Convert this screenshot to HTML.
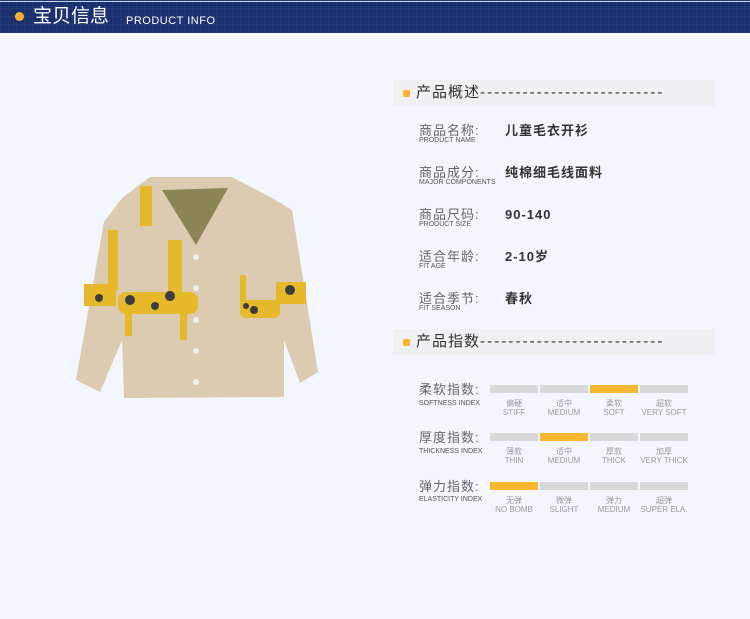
<!DOCTYPE html>
<html><head><meta charset="utf-8"><style>
*{margin:0;padding:0}
body{width:750px;height:619px;background:#f3f6fc;position:relative;overflow:hidden;font-family:"Liberation Sans","Noto Sans CJK SC",sans-serif}
.a{position:absolute;white-space:nowrap}
.hdr{position:absolute;left:0;top:0;width:750px;height:33px;background-color:#1a3070;
background-image:linear-gradient(rgba(255,255,255,.035) 1px,transparent 1px),linear-gradient(90deg,rgba(255,255,255,.035) 1px,transparent 1px);background-size:8px 8px}
.line{position:absolute;left:0;top:1px;width:750px;height:1px;background:#c9d3ea}
.sec{position:absolute;left:393px;width:322px;height:26px;background:#f0f0f2}
.dot{position:absolute;width:7px;height:7px;border-radius:2px;background:#f7b42c}
.st{font-size:15px;line-height:20px;color:#333;letter-spacing:1px}
.st span{letter-spacing:2.1px}
.lb{font-size:13px;line-height:15px;color:#666;letter-spacing:1px}
.en{font-size:7px;line-height:8px;color:#555}
.vl{font-size:13px;line-height:15px;color:#333;font-weight:bold;letter-spacing:1px}
.bar{position:absolute;width:48px;height:8px;background:#d9d9d9}
.y{background:#f7b731}
.c{font-size:8px;color:#999;text-align:center;width:48px;line-height:9px}
</style></head><body>
<div class="hdr"></div><div class="line"></div>
<div class="a" style="left:15px;top:12px;width:9px;height:9px;border-radius:50%;background:#f7b42c"></div>
<div class="a" style="left:33px;top:5px;font-size:19px;line-height:24px;color:#fff">宝贝信息</div>
<div class="a" style="left:126px;top:15px;font-size:11px;line-height:13px;color:#fff;letter-spacing:0.5px">PRODUCT INFO</div>

<svg class="a" style="left:0;top:0" width="340" height="420">
<polygon fill="#dccbb0" points="150,177 232,177 272,198 292,210 318,372 300,383 284,340 284,397 124,398 122,340 100,392 76,380 104,222 122,198"/>
<polygon fill="#8c8656" points="162,190 228,188 196,245"/>
<g fill="#e6b92a">
<rect x="140" y="186" width="12" height="40"/>
<rect x="168" y="240" width="14" height="60"/>
<rect x="118" y="292" width="80" height="22" rx="8"/>
<rect x="125" y="300" width="7" height="36"/><rect x="180" y="300" width="7" height="40"/>
<rect x="84" y="284" width="32" height="22"/><rect x="108" y="230" width="10" height="60"/>
<rect x="240" y="300" width="40" height="18" rx="6"/><rect x="240" y="275" width="6" height="30"/>
<rect x="276" y="282" width="30" height="22"/>
</g>
<g fill="#3a3c40"><circle cx="130" cy="300" r="5"/><circle cx="155" cy="306" r="4"/><circle cx="170" cy="296" r="5"/><circle cx="99" cy="298" r="4"/><circle cx="254" cy="310" r="4"/><circle cx="290" cy="290" r="5"/><circle cx="246" cy="306" r="3"/></g>
<g fill="#f2f0ec"><circle cx="196" cy="257" r="3"/><circle cx="196" cy="288" r="3"/><circle cx="196" cy="320" r="3"/><circle cx="196" cy="351" r="3"/><circle cx="196" cy="382" r="3"/></g>
</svg>

<div class="sec" style="top:80px"></div>
<div class="dot" style="left:403px;top:90px"></div>
<div class="a st" style="left:416px;top:83px">产品概述<span>--------------------------</span></div>
<div class="a lb" style="left:419px;top:123px">商品名称:</div><div class="a en" style="left:419px;top:137px">PRODUCT NAME</div><div class="a vl" style="left:505px;top:123px">儿童毛衣开衫</div>
<div class="a lb" style="left:419px;top:165px">商品成分:</div><div class="a en" style="left:419px;top:179px">MAJOR COMPONENTS</div><div class="a vl" style="left:505px;top:165px">纯棉细毛线面料</div>
<div class="a lb" style="left:419px;top:207px">商品尺码:</div><div class="a en" style="left:419px;top:221px">PRODUCT SIZE</div><div class="a vl" style="left:505px;top:207px">90-140</div>
<div class="a lb" style="left:419px;top:249px">适合年龄:</div><div class="a en" style="left:419px;top:263px">FIT AGE</div><div class="a vl" style="left:505px;top:249px">2-10岁</div>
<div class="a lb" style="left:419px;top:291px">适合季节:</div><div class="a en" style="left:419px;top:305px">FIT SEASON</div><div class="a vl" style="left:505px;top:291px">春秋</div>

<div class="sec" style="top:329px"></div>
<div class="dot" style="left:403px;top:339px"></div>
<div class="a st" style="left:416px;top:332px">产品指数<span>--------------------------</span></div>

<div class="a lb" style="left:419px;top:382px">柔软指数:</div><div class="a en" style="left:419px;top:400px">SOFTNESS INDEX</div>
<div class="bar" style="left:490px;top:385px"></div><div class="bar" style="left:540px;top:385px"></div><div class="bar y" style="left:590px;top:385px"></div><div class="bar" style="left:640px;top:385px"></div>
<div class="a c" style="left:490px;top:399px">偏硬<br>STIFF</div><div class="a c" style="left:540px;top:399px">适中<br>MEDIUM</div><div class="a c" style="left:590px;top:399px">柔软<br>SOFT</div><div class="a c" style="left:640px;top:399px">超软<br>VERY SOFT</div>

<div class="a lb" style="left:419px;top:430px">厚度指数:</div><div class="a en" style="left:419px;top:448px">THICKNESS INDEX</div>
<div class="bar" style="left:490px;top:433px"></div><div class="bar y" style="left:540px;top:433px"></div><div class="bar" style="left:590px;top:433px"></div><div class="bar" style="left:640px;top:433px"></div>
<div class="a c" style="left:490px;top:447px">薄款<br>THIN</div><div class="a c" style="left:540px;top:447px">适中<br>MEDIUM</div><div class="a c" style="left:590px;top:447px">厚款<br>THICK</div><div class="a c" style="left:640px;top:447px">加厚<br>VERY THICK</div>

<div class="a lb" style="left:419px;top:479px">弹力指数:</div><div class="a en" style="left:419px;top:496px">ELASTICITY INDEX</div>
<div class="bar y" style="left:490px;top:482px"></div><div class="bar" style="left:540px;top:482px"></div><div class="bar" style="left:590px;top:482px"></div><div class="bar" style="left:640px;top:482px"></div>
<div class="a c" style="left:490px;top:496px">无弹<br>NO BOMB</div><div class="a c" style="left:540px;top:496px">微弹<br>SLIGHT</div><div class="a c" style="left:590px;top:496px">弹力<br>MEDIUM</div><div class="a c" style="left:640px;top:496px">超弹<br>SUPER ELA.</div>
</body></html>
